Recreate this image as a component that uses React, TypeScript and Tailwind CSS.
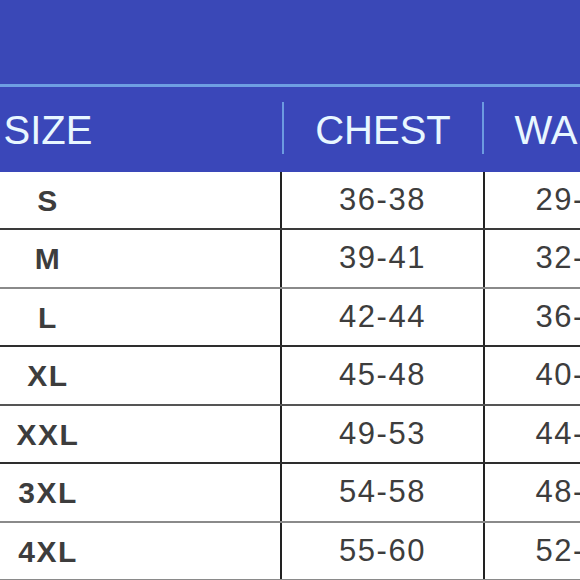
import React from "react";

const rows = [
    { size: "S", chest: "36-38", waist: "29-31", line: "border-[#3a3a3a]" },
    { size: "M", chest: "39-41", waist: "32-34", line: "border-[#8a8a8a]" },
    { size: "L", chest: "42-44", waist: "36-38", line: "border-[#2e2e2e]" },
    { size: "XL", chest: "45-48", waist: "40-42", line: "border-[#555555]" },
    { size: "XXL", chest: "49-53", waist: "44-46", line: "border-[#2e2e2e]" },
    { size: "3XL", chest: "54-58", waist: "48-50", line: "border-[#8a8a8a]" },
    { size: "4XL", chest: "55-60", waist: "52-54", line: "border-[#8a8a8a]" },
];

const heights = ["h-[58px]", "h-[59px]", "h-[58px]", "h-[59px]", "h-[58px]", "h-[59px]", "h-[58px]"];

export default function App() {
    return (
        <div className="w-[580px] h-[580px] overflow-hidden bg-white font-['Liberation_Sans',Arial,sans-serif]">
            {/* Top band */}
            <div className="h-[84px] bg-[#3a48b7]" />
            <div className="h-[3px] bg-[#6e9fe3]" />

            {/* Header row */}
            <div className="h-[85px] bg-[#3a47b9] flex items-center text-[40px] text-[#e8f7ff] leading-none whitespace-nowrap">
                <div className="w-[282px] shrink-0">
                    <div className="w-[96px] text-center">SIZE</div>
                </div>
                <div className="w-[2px] h-[52px] bg-[#6c9be0] shrink-0 -mt-[4px]" />
                <div className="w-[198px] shrink-0 text-center">CHEST</div>
                <div className="w-[2px] h-[52px] bg-[#6c9be0] shrink-0 -mt-[4px]" />
                <div className="w-[190px] shrink-0 text-center pr-[4px]">WAIST</div>
            </div>

            {/* Body rows */}
            {rows.map((r, i) => (
                <div
                    key={r.size}
                    className={`flex border-b-2 ${r.line} ${heights[i]} text-[#3d3d3d] whitespace-nowrap`}
                >
                    <div className="w-[282px] shrink-0 border-r-2 border-[#222222] flex items-center">
                        <div className="w-[96px] text-center font-bold text-[30px] tracking-[1.5px]">{r.size}</div>
                    </div>
                    <div className="w-[203px] shrink-0 border-r-2 border-[#222222] flex items-center justify-center text-[31px] tracking-[1.5px]">
                        {r.chest}
                    </div>
                    <div className="w-[190px] shrink-0 flex items-center justify-center text-[31px] tracking-[1.5px] pr-[2px]">
                        {r.waist}
                    </div>
                </div>
            ))}
        </div>
    );
}
